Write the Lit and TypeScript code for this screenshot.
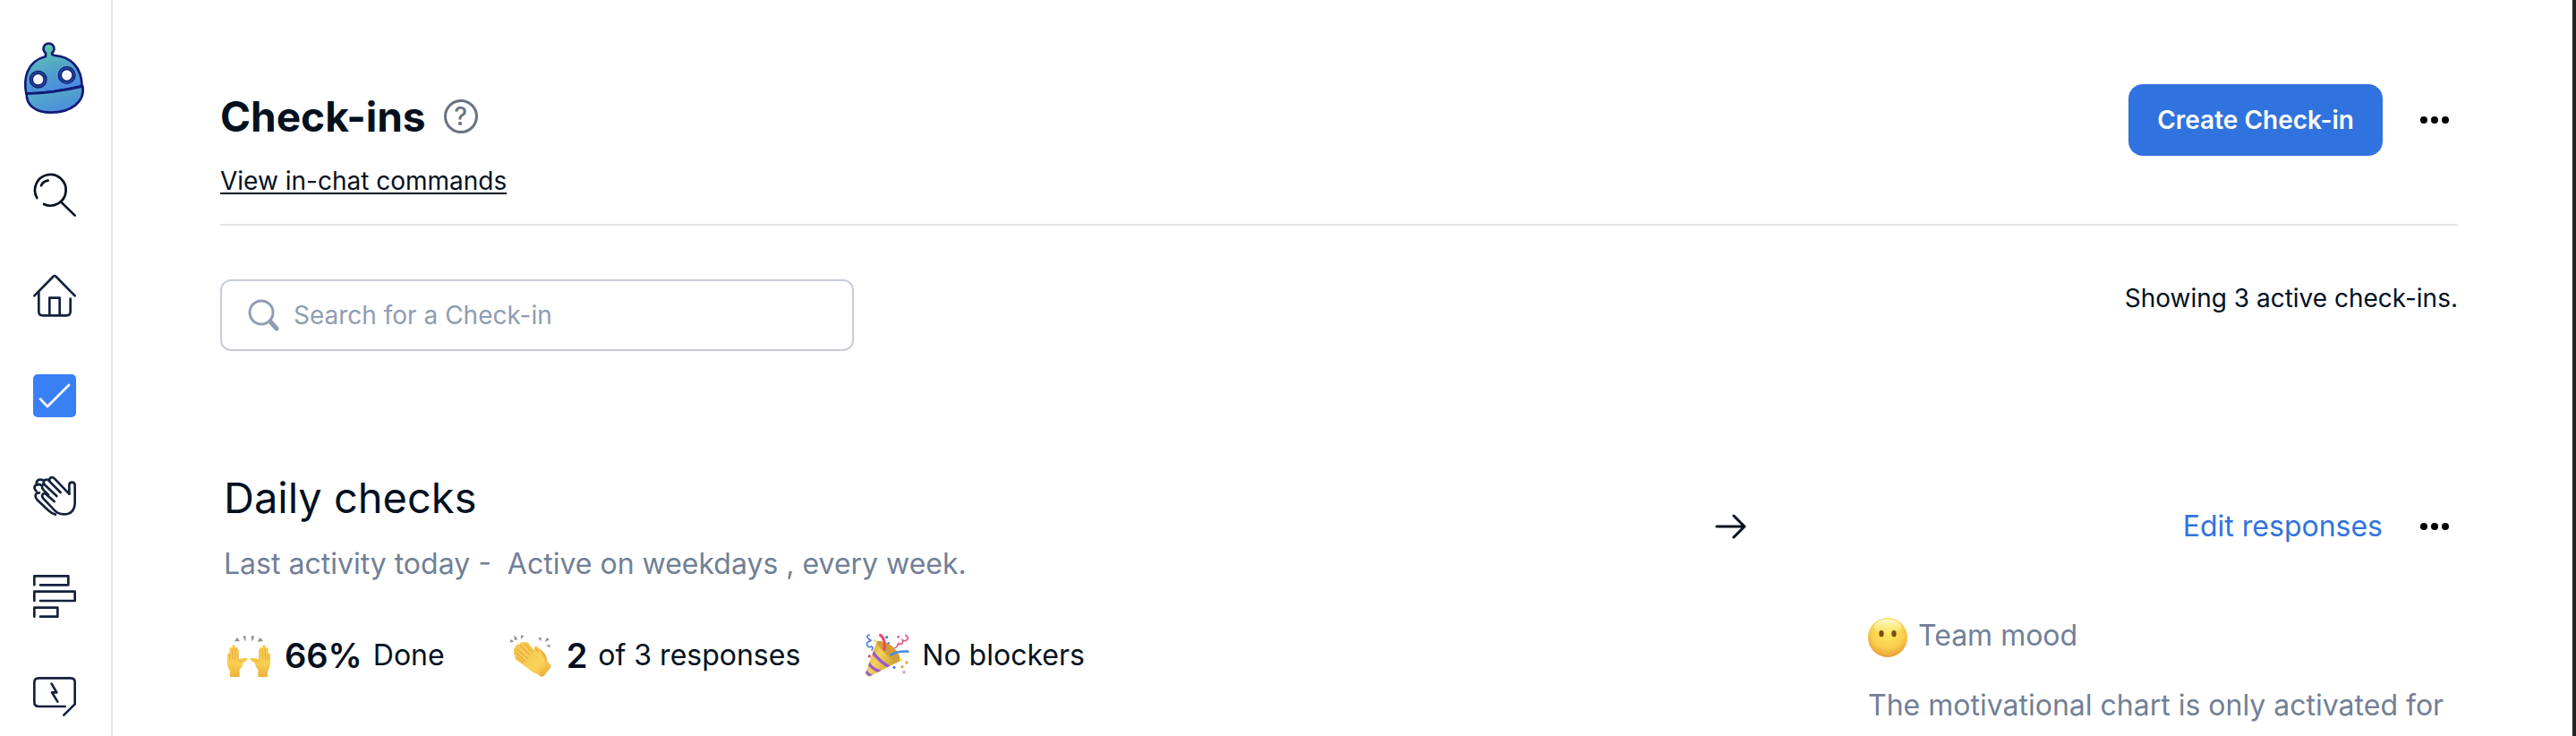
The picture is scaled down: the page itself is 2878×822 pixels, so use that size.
import { LitElement, html, css } from "lit";
import { customElement } from "lit/decorators.js";

const robot = html`<svg width="68" height="82" viewBox="81 84 204 246" overflow="visible" aria-hidden="true">
  <defs>
    <linearGradient id="skin" x1="0.3" y1="0" x2="0.65" y2="1">
      <stop offset="0" stop-color="#62d0a6" /><stop offset="0.45" stop-color="#52a8c4" /><stop offset="1" stop-color="#4a86e6" />
    </linearGradient>
    <linearGradient id="jaw" x1="0.1" y1="0" x2="0.8" y2="1">
      <stop offset="0" stop-color="#56b6c0" /><stop offset="1" stop-color="#4a88e0" />
    </linearGradient>
  </defs>
  <g stroke="#121a78" stroke-width="8" stroke-linejoin="round">
    <path d="M153 129V118A18 18 0 1 1 174 118Q174 125 184 126C236 130 273 164 275 228Q182 251 88 254C79 208 86 146 153 129Z" fill="url(#skin)" />
    <path d="M89 254Q182 251 277 229C286 282 236 317 172 317C116 317 88 290 89 254Z" fill="url(#jaw)" />
  </g>
  <g fill="#f3f4f8" stroke="#1e4a9a" stroke-width="8">
    <circle cx="128" cy="206" r="23" /><circle cx="224" cy="192" r="23" />
  </g>
  <g fill="none" stroke="#121a78" stroke-width="4">
    <circle cx="128" cy="206" r="28" /><circle cx="224" cy="192" r="28" />
    <circle cx="128" cy="206" r="19" /><circle cx="224" cy="192" r="19" />
  </g>
</svg>`;

const search = html`<svg class="icon dark" viewBox="111 522 144 144" aria-hidden="true">
  <path d="M124 603A52 52 0 1 1 147 624" /><path d="M138 562Q144 547 161 545M204 616L251 662" />
</svg>`;

const home = html`<svg class="icon" viewBox="111 78 144 144" aria-hidden="true">
  <path d="M115 151L178 87Q183 81 188 87L251 151" />
  <path d="M130 140V204Q130 217 143 217H223Q236 217 236 204V161M166 215V158H200V215" />
</svg>`;

const check = html`<svg class="icon" viewBox="111 414 144 144" aria-hidden="true">
  <rect x="111" y="414" width="144" height="144" rx="15" fill="#3a80f5" stroke="none" />
  <path d="M135 497L159 522L231 450" stroke="#fff" />
</svg>`;

const hand = html`<svg class="icon" viewBox="111 90 144 144" aria-hidden="true">
  <path d="M232 155V126Q232 116 241 116Q251 116 251 127V186Q249 223 214 223Q195 223 181 208L145 170Q138 161 144 155Q150 151 157 158L182 180" />
  <path d="M232 155L183 104Q175 96 168 102Q162 108 168 115L203 150" />
  <path d="M166 112Q157 103 149 110Q143 116 149 124L190 162" />
  <path d="M149 123Q139 122 141 132Q142 138 147 143L162 158" />
  <path d="M145 109Q131 103 124 112Q120 119 126 125M138 125Q122 119 116 130Q114 138 122 146M132 151Q117 152 119 163Q119 168 124 174L162 210Q174 221 186 224" />
</svg>`;

const bars = html`<svg class="icon" viewBox="111 426 144 144" aria-hidden="true">
  <path d="M115 460V430H229V460H135M115 513V482H251V513H135M115 566V536H193V566H135" />
</svg>`;

const chat = html`<svg class="icon" viewBox="111 762 144 144" aria-hidden="true">
  <path d="M218 867H130Q115 867 115 853V786Q115 772 130 772H237Q251 772 251 786V859L214 896" />
  <path d="M173 791L190 820H174L193 851" />
</svg>`;

const dots = html`<svg width="32" height="8" viewBox="0 0 32 8" aria-hidden="true">
  <circle cx="4" cy="4" r="4" /><circle cx="16" cy="4" r="4" /><circle cx="28" cy="4" r="4" />
</svg>`;

const raisedHands = html`<svg class="emoji" viewBox="15 24 168 144" aria-hidden="true">
  <defs>
    <linearGradient id="palm" x1="0" y1="0" x2="0" y2="1">
      <stop offset="0" stop-color="#f6ca52" /><stop offset="0.6" stop-color="#f9cd50" /><stop offset="1" stop-color="#eeb03a" />
    </linearGradient>
    <g id="raised">
      <path d="M36 168V148Q27 138 27 124V94Q28 86 34 90V74Q37 65 43 71V64Q49 56 54 66V72Q61 65 64 76V108L82 105Q95 103 96 109Q90 117 80 121Q76 136 68 144V168Z" fill="url(#palm)" />
      <path d="M35 92V112M44 74V110M54 72V110M64 78V112M66 117L82 109" fill="none" stroke="#dd9c30" stroke-width="2" />
    </g>
  </defs>
  <use href="#raised" /><use href="#raised" transform="matrix(-1 0 0 1 198 0)" />
  <path d="M60 36L69 49L51 48ZM79 32L89 30L88 50ZM107 30L118 32L109 50ZM137 36L147 48L128 50Z" fill="#8c8c8c" />
</svg>`;

const clap = html`<svg class="emoji" viewBox="6 24 168 144" aria-hidden="true">
  <defs>
    <linearGradient id="clapping" x1="0" y1="0" x2="1" y2="1">
      <stop offset="0" stop-color="#f5c54d" /><stop offset="0.7" stop-color="#fad25a" /><stop offset="1" stop-color="#e8a335" />
    </linearGradient>
  </defs>
  <path d="M102 72Q103 62 111 67L132 84Q143 94 146 116L158 130L135 164Q126 172 117 162L95 138Z" fill="#ecb340" />
  <path d="M68 52Q78 48 84 57L103 80Q100 68 107 67Q117 68 120 80L139 112L158 130Q154 149 133 157Q112 164 94 150L40 110Q33 104 39 98Q29 90 34 83Q30 73 39 68Q42 57 52 59Q57 48 68 52Z" fill="url(#clapping)" />
  <path d="M70 57L96 86M54 63L88 96M41 73L82 108M38 85L74 117M42 100L66 121M104 70L116 84" fill="none" stroke="#d69733" stroke-width="3" />
  <path d="M34 27L46 42L36 45ZM21 42L34 49L22 53ZM57 28L67 31L57 42ZM115 37L125 36L124 50ZM143 37L153 43L138 51ZM141 63L155 60L154 70Z" fill="#8c8c8c" />
</svg>`;

const party = html`<svg class="emoji" viewBox="15 24 168 144" aria-hidden="true">
  <defs>
    <linearGradient id="cone" x1="0" y1="0" x2="1" y2="0.6">
      <stop offset="0" stop-color="#b98a1f" /><stop offset="0.45" stop-color="#f4d55c" /><stop offset="1" stop-color="#c8962a" />
    </linearGradient>
    <clipPath id="coneShape"><path d="M68 49L145 115L48 164Q34 171 30 156Z" /></clipPath>
  </defs>
  <path d="M68 49L145 115L48 164Q34 171 30 156Z" fill="url(#cone)" />
  <path d="M53 84Q72 112 108 134M39 120Q50 142 80 150M30 146Q34 158 52 165" fill="none" stroke="#9a5bd0" stroke-width="10" clip-path="url(#coneShape)" />
  <path d="M68 49Q84 42 121 66Q151 97 145 115Q134 123 103 96Q69 66 68 49Z" fill="#d39e35" />
  <path d="M76 26Q98 36 93 80" fill="none" stroke="#e8486c" stroke-width="9" />
  <path d="M112 96Q134 80 175 83" fill="none" stroke="#4d86e8" stroke-width="8" />
  <path d="M45 27Q30 30 38 38T50 46Q31 51 35 61T50 66Q58 68 50 80" fill="none" stroke="#4a7de0" stroke-width="5" />
  <path d="M163 27Q178 38 169 44T154 45Q157 57 147 58T139 57Q138 67 127 72" fill="none" stroke="#e0527a" stroke-width="5" />
  <g fill="#4a7de0"><circle cx="101" cy="35" r="5" /><circle cx="107" cy="55" r="4" /><circle cx="126" cy="136" r="5" /></g>
  <g fill="#f5dc64"><circle cx="61" cy="47" r="5" /><circle cx="149" cy="111" r="5" /></g>
  <g fill="#e0527a"><circle cx="43" cy="99" r="5" /><circle cx="140" cy="34" r="4" /></g>
  <g fill="#f2a04a"><circle cx="153" cy="134" r="5" /><circle cx="168" cy="120" r="5" /></g>
  <circle cx="159" cy="152" r="5" fill="#e890c8" />
</svg>`;

const face = html`<svg class="face" viewBox="24 29 132 132" aria-hidden="true">
  <defs>
    <radialGradient id="cheek" cx="0.5" cy="0.35" r="0.68">
      <stop offset="0" stop-color="#fdea62" /><stop offset="0.6" stop-color="#f9d04c" /><stop offset="0.88" stop-color="#efa93a" /><stop offset="1" stop-color="#dc8a2a" />
    </radialGradient>
    <linearGradient id="shine" x1="0" y1="0" x2="0" y2="1">
      <stop offset="0" stop-color="#fffbd2" /><stop offset="1" stop-color="#fff48a" stop-opacity="0" />
    </linearGradient>
  </defs>
  <circle cx="90" cy="95" r="66" fill="url(#cheek)" />
  <ellipse cx="90" cy="61" rx="46" ry="28" fill="url(#shine)" />
  <ellipse cx="69" cy="82" rx="8" ry="11" fill="#7d4a12" /><ellipse cx="111" cy="82" rx="8" ry="11" fill="#7d4a12" />
</svg>`;

const navItems = [
  { label: "Search", icon: search },
  { label: "Home", icon: home },
  { label: "Check-ins", icon: check },
  { label: "Kudos", icon: hand },
  { label: "Polls", icon: bars },
  { label: "Automations", icon: chat },
];

@customElement("side-nav")
export class SideNav extends LitElement {
  static styles = css`
    :host { display: block; box-sizing: border-box; width: 126px; flex: none; border-right: 2px solid #e5e5e5; padding: 48px 2px 0 0; }
    nav { display: flex; flex-direction: column; align-items: center; gap: 64px; }
    a { display: block; }
    svg { display: block; }
    .icon { width: 48px; height: 48px; overflow: visible; fill: none; stroke: #14213d; stroke-width: 8; stroke-linecap: round; stroke-linejoin: round; }
    .dark { stroke: #03111f; }
  `;
  render() {
    return html`<nav aria-label="Main">
      <a href="#" aria-label="Dashboard">${robot}</a>
      ${navItems.map((item) => html`<a href="#" aria-label=${item.label}>${item.icon}</a>`)}
    </nav>`;
  }
}

@customElement("app-root")
export class AppRoot extends LitElement {
  static styles = css`
    :host { display: flex; box-sizing: border-box; height: 100vh; overflow: hidden; border-right: 4px solid #202326; background: #fff; color: #03111f; font: 400 28px/36px Inter, sans-serif; }
    main { flex: 1; min-width: 0; padding: 94px 128px 0 120px; }
    h1, h2, p { margin: 0; }
    svg { display: block; }
    button { font: inherit; color: inherit; background: none; border: 0; padding: 0; }

    .header { display: flex; justify-content: space-between; align-items: flex-start; padding-bottom: 30px; border-bottom: 2px solid #e5e5e5; }
    .heading { padding-top: 8px; }
    .title { display: flex; align-items: center; gap: 20px; margin-bottom: 26px; }
    h1 { font-size: 46px; line-height: 56px; font-weight: 700; }
    .help { box-sizing: border-box; width: 38px; height: 38px; border: 3px solid #6b7280; border-radius: 50%; color: #6b7280; font-size: 28px; line-height: 32px; font-weight: 500; text-align: center; }
    .commands { display: block; color: inherit; text-underline-offset: 3px; text-decoration-thickness: 2px; }
    .actions { display: flex; align-items: center; gap: 32px; }
    .create { height: 80px; padding: 0 32px; border-radius: 16px; background: #3173de; color: #fff; font-weight: 600; }
    .more { display: grid; place-items: center; width: 52px; height: 52px; }

    .toolbar { display: flex; justify-content: space-between; align-items: flex-start; margin-top: 60px; }
    .search { box-sizing: border-box; display: flex; align-items: center; gap: 16px; width: 708px; height: 80px; padding: 0 28px; border: 2px solid #c8ccda; border-radius: 12px; }
    .search input { flex: 1; min-width: 0; border: 0; outline: 0; padding: 0; background: none; font: inherit; color: inherit; }
    .search input::placeholder { color: #8e9db2; opacity: 1; }
    .count { padding-top: 3px; }

    .card { display: grid; grid-template-columns: 1fr 659px; margin-top: 136px; font-size: 32px; line-height: 40px; }
    .summary { display: flex; justify-content: space-between; align-items: center; padding: 0 136px 0 4px; }
    h2 { font-size: 47px; line-height: 56px; font-weight: 400; margin-bottom: 28px; }
    .muted { color: #718096; }
    .schedule { white-space: pre; line-height: 36px; }
    .controls { display: flex; justify-content: flex-end; align-items: center; gap: 32px; }
    .edit { color: #3173de; text-decoration: none; }
    .stats { display: flex; align-items: flex-start; gap: 68px; margin-top: 60px; padding-left: 4px; line-height: 48px; }
    .stat { display: flex; align-items: center; gap: 12px; }
    .stat strong { font-size: 38px; font-weight: 600; }
    .emoji { width: 56px; height: 48px; overflow: visible; }
    .face { width: 44px; height: 44px; }
    .mood { margin-top: 42px; }
    .mood-title { display: flex; gap: 12px; margin-bottom: 32px; }
    .note { line-height: 44px; }
  `;

  render() {
    return html`
      <side-nav></side-nav>
      <main>
        <header class="header">
          <div class="heading">
            <div class="title">
              <h1>Check-ins</h1>
              <button class="help" aria-label="Help">?</button>
            </div>
            <a class="commands" href="#">View in-chat commands</a>
          </div>
          <div class="actions">
            <button class="create">Create Check-in</button>
            <button class="more" aria-label="More options">${dots}</button>
          </div>
        </header>

        <div class="toolbar">
          <label class="search">
            <svg width="36" height="36" viewBox="0 0 36 36" fill="none" stroke="#8e9db2" aria-label="Search">
              <circle cx="16" cy="15" r="13" stroke-width="3" />
              <path d="M26 25L33 33" stroke-width="5" stroke-linecap="round" />
            </svg>
            <input type="search" placeholder="Search for a Check-in" />
          </label>
          <p class="count">Showing 3 active check-ins.</p>
        </div>

        <section class="card">
          <div class="summary">
            <div>
              <h2>Daily checks</h2>
              <p class="muted schedule">Last activity today -  Active on weekdays , every week.</p>
            </div>
            <svg width="36" height="36" viewBox="0 0 36 36" fill="none" stroke="#03111f" stroke-width="3" stroke-linecap="round" stroke-linejoin="round" aria-hidden="true">
              <path d="M3 18H34M22 6L34 18L22 30" />
            </svg>
          </div>
          <div class="controls">
            <a class="edit" href="#">Edit responses</a>
            <button class="more" aria-label="More options">${dots}</button>
          </div>
          <div class="stats">
            <div class="stat">${raisedHands}<strong>66%</strong><span>Done</span></div>
            <div class="stat">${clap}<strong>2</strong><span>of 3 responses</span></div>
            <div class="stat">${party}<span>No blockers</span></div>
          </div>
          <div class="mood muted">
            <div class="mood-title">${face}<span>Team mood</span></div>
            <p class="note">The motivational chart is only activated for</p>
          </div>
        </section>
      </main>
    `;
  }
}
